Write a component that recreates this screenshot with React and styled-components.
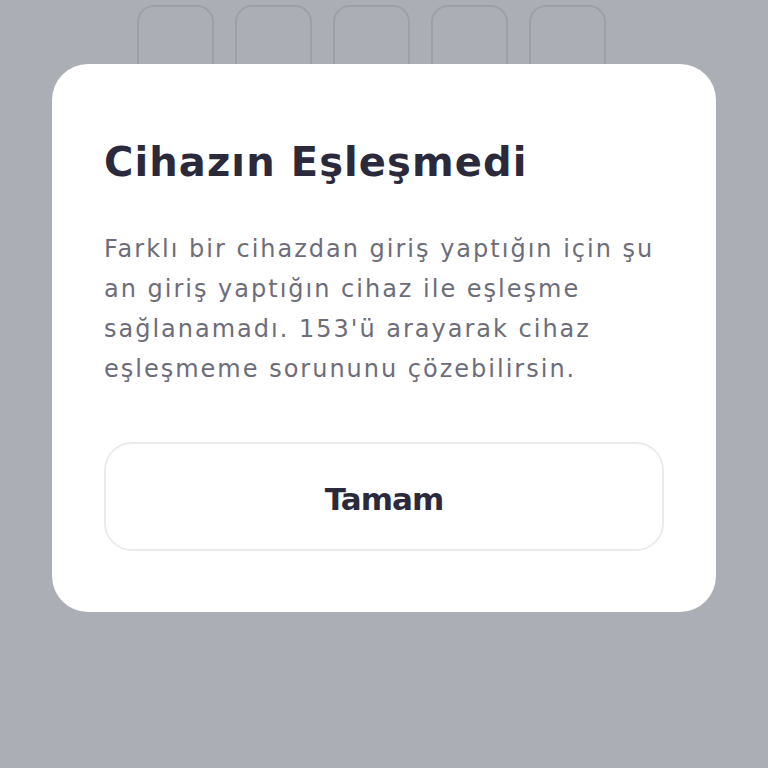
import React from "react";
import styled, { createGlobalStyle } from "styled-components";

const GlobalStyle = createGlobalStyle`
  html, body {
    margin: 0;
    padding: 0;
    width: 768px;
    height: 768px;
    overflow: hidden;
    background: #ffffff;
  }
  * { box-sizing: border-box; }
  body {
    font-family: "DejaVu Sans", Inter, sans-serif;
  }
`;

const Page = styled.div`
  width: 768px;
  height: 768px;
  background: #ffffff;
  padding: 5px 0 0 137px;
`;

const CodeRow = styled.div`
  display: flex;
  gap: 21px;
`;

const CodeBox = styled.div`
  width: 77px;
  height: 78px;
  border: 2px solid #e8e8ec;
  border-radius: 17px;
  background: #ffffff;
`;

const Backdrop = styled.div`
  position: fixed;
  inset: 0;
  background: rgba(45, 52, 70, 0.4);
  display: flex;
  flex-direction: column;
  align-items: flex-start;
  padding: 64px 52px;
`;

const Dialog = styled.div`
  width: 664px;
  background: #ffffff;
  border-radius: 36px;
  padding: 74px 52px 61px;
  display: flex;
  flex-direction: column;
`;

const Title = styled.h2`
  margin: 0;
  font-family: "DejaVu Sans", Inter, sans-serif;
  font-weight: 700;
  font-size: 40px;
  line-height: 48px;
  letter-spacing: 1.1px;
  color: #2b2a3d;
`;

const Message = styled.p`
  margin: 43px 0 0;
  font-family: "DejaVu Sans", Inter, sans-serif;
  font-weight: 400;
  font-size: 24px;
  line-height: 40px;
  letter-spacing: 2px;
  color: #6d6d79;
`;

const OkButton = styled.button`
  margin-top: 53px;
  height: 109px;
  width: 100%;
  padding: 4px 0 0;
  border: 2px solid #ebebed;
  border-radius: 28px;
  background: #ffffff;
  font-family: "DejaVu Sans", Inter, sans-serif;
  font-weight: 700;
  font-size: 31px;
  letter-spacing: -1px;
  color: #2b2a3d;
  cursor: pointer;
`;

export default function App() {
  return (
    <>
      <GlobalStyle />
      <Page>
        <CodeRow>
          {[0, 1, 2, 3, 4].map((i) => (
            <CodeBox key={i} />
          ))}
        </CodeRow>
      </Page>
      <Backdrop>
        <Dialog>
          <Title>Cihazın Eşleşmedi</Title>
          <Message>
            Farklı bir cihazdan giriş yaptığın için şu an giriş yaptığın cihaz
            ile eşleşme sağlanamadı. 153'ü arayarak cihaz eşleşmeme sorununu
            çözebilirsin.
          </Message>
          <OkButton>Tamam</OkButton>
        </Dialog>
      </Backdrop>
    </>
  );
}
